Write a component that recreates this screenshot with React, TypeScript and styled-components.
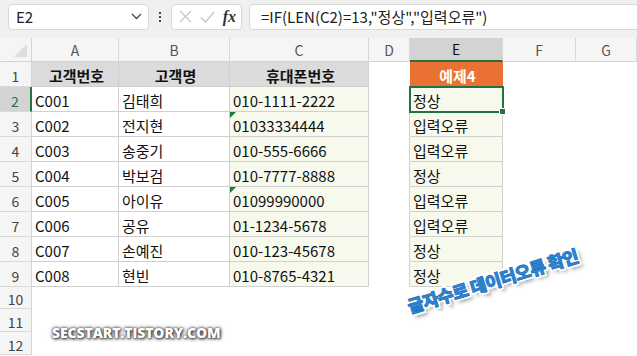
import React from "react";
import styled, { createGlobalStyle } from "styled-components";

const GlobalStyle = createGlobalStyle`
    html, body {
        margin: 0;
        padding: 0;
        background: #ffffff;
    }
    body {
        font-family: "Noto Sans CJK KR", "Noto Sans", sans-serif;
    }
`;

const Sheet = styled.div`
    position: relative;
    width: 637px;
    height: 356px;
    overflow: hidden;
    background: #ffffff;
    color: #000;
`;

const Toolbar = styled.div`
    display: flex;
    align-items: center;
    height: 38px;
    padding: 0 0 5px 8px;
    box-sizing: border-box;
    background: #f0f0f0;
`;

const NameBox = styled.div`
    display: flex;
    align-items: center;
    justify-content: space-between;
    flex-shrink: 0;
    width: 141px;
    height: 26px;
    box-sizing: border-box;
    padding: 0 6px 0 7px;
    background: #fff;
    border: 1px solid #d8d8d8;
    border-radius: 4px;
    font-size: 15px;
    color: #222;
`;

const Dots = styled.div`
    display: flex;
    flex-direction: column;
    align-items: center;
    justify-content: center;
    flex-shrink: 0;
    gap: 2px;
    width: 22px;
    height: 26px;

    span {
        width: 2px;
        height: 2px;
        background: #444;
    }
`;

const FxBox = styled.div`
    display: flex;
    align-items: center;
    justify-content: space-between;
    flex-shrink: 0;
    width: 71px;
    height: 26px;
    box-sizing: border-box;
    padding: 0 5px 0 7px;
    background: #fff;
    border: 1px solid #d8d8d8;
    border-radius: 4px;
`;

const Fx = styled.span`
    font-family: "Liberation Serif", serif;
    font-style: italic;
    font-weight: bold;
    font-size: 16px;
    color: #333;
`;

const FormulaBox = styled.div`
    display: flex;
    align-items: center;
    flex-shrink: 0;
    width: 420px;
    height: 26px;
    margin-left: 7px;
    box-sizing: border-box;
    padding-left: 11px;
    background: #fff;
    border: 1px solid #d8d8d8;
    border-radius: 4px;
    font-size: 15px;
    color: #222;
    white-space: nowrap;
`;

const Row = styled.div<{ $h: number }>`
    display: flex;
    height: ${(p) => p.$h}px;
`;

const Corner = styled.div`
    position: relative;
    width: 32px;
    flex-shrink: 0;
    box-sizing: border-box;
    background: #f5f5f5;
    border-right: 1px solid #d4d4d4;
    border-bottom: 1px solid #d4d4d4;

    &::after {
        content: "";
        position: absolute;
        right: 4px;
        bottom: 4px;
        border-left: 13px solid transparent;
        border-bottom: 13px solid #dedede;
    }
`;

const ColHead = styled.div<{ $w: number; $active?: boolean }>`
    display: flex;
    align-items: center;
    justify-content: center;
    width: ${(p) => p.$w}px;
    flex-shrink: 0;
    box-sizing: border-box;
    background: ${(p) => (p.$active ? "#d3d3d3" : "#f5f5f5")};
    border-right: 1px solid #d9d9d9;
    border-bottom: ${(p) => (p.$active ? "2px solid #217346" : "1px solid #d4d4d4")};
    font-size: 14px;
    color: ${(p) => (p.$active ? "#111" : "#555")};
`;

const RowHead = styled.div<{ $active?: boolean }>`
    display: flex;
    align-items: center;
    justify-content: center;
    padding-top: 3px;
    width: 32px;
    flex-shrink: 0;
    box-sizing: border-box;
    background: ${(p) => (p.$active ? "#d3d3d3" : "#f5f5f5")};
    border-bottom: 1px solid #d9d9d9;
    border-right: ${(p) => (p.$active ? "2px solid #217346" : "1px solid #d4d4d4")};
    font-size: 14px;
    color: ${(p) => (p.$active ? "#217346" : "#444")};
`;

const Cell = styled.div<{
    $w: number;
    $fill?: string;
    $bold?: boolean;
    $center?: boolean;
    $color?: string;
    $border?: boolean;
    $edge?: boolean;
    $flag?: boolean;
    $selected?: boolean;
}>`
    position: relative;
    display: flex;
    align-items: center;
    justify-content: ${(p) => (p.$center ? "center" : "flex-start")};
    width: ${(p) => p.$w}px;
    flex-shrink: 0;
    box-sizing: border-box;
    padding: 2px 0 0 3px;
    background: ${(p) => p.$fill || "transparent"};
    border-right: 1px solid ${(p) => (p.$border || p.$edge ? "#d0d0d0" : "transparent")};
    border-bottom: 1px solid ${(p) => (p.$border ? "#d0d0d0" : "transparent")};
    font-size: 15px;
    font-weight: ${(p) => (p.$bold ? 700 : 400)};
    color: ${(p) => p.$color || "#111"};
    white-space: nowrap;

    ${(p) =>
        p.$flag &&
        `&::before {
            content: "";
            position: absolute;
            left: 0;
            top: 0;
            border-top: 6px solid #1f7a36;
            border-right: 6px solid transparent;
        }`}

    ${(p) =>
        p.$selected &&
        `outline: 2px solid #217346;
        outline-offset: -1px;
        z-index: 2;
        &::after {
            content: "";
            position: absolute;
            right: -4px;
            bottom: -4px;
            width: 5px;
            height: 5px;
            background: #217346;
            border: 1px solid #fff;
        }`}
`;

const Watermark = styled.div`
    position: absolute;
    left: 52px;
    top: 323px;
    font-family: "Open Sans", "Noto Sans", sans-serif;
    font-weight: 800;
    font-size: 14px;
    letter-spacing: -0.1px;
    color: #fff;
    text-shadow: 0 0 2px #444, 1px 1px 3px #333, 0 0 4px #666;
`;

const Stamp = styled.div`
    position: absolute;
    left: 404px;
    top: 268px;
    transform: rotate(-17deg);
    transform-origin: center;
    font-family: "Noto Sans CJK KR", sans-serif;
    font-weight: 900;
    font-size: 17.5px;
    letter-spacing: -0.6px;
    color: #2b86d6;
    -webkit-text-stroke: 0.7px #1c6db8;
    text-shadow: 1px 0 0 #fff, -1px 0 0 #fff, 0 1px 0 #fff, 0 -1px 0 #fff, 2px 2px 0 #fff,
        -2px -2px 0 #fff, 2px -2px 0 #fff, -2px 2px 0 #fff, 2px 0 0 #fff, -2px 0 0 #fff,
        0 2px 0 #fff, 0 -2px 0 #fff, 3px 4px 4px rgba(0, 0, 0, 0.45);
    white-space: nowrap;
`;

const widths = { A: 87, B: 111, C: 139, D: 41, E: 93, F: 73, G: 61 };
const cols = ["A", "B", "C", "D", "E", "F", "G"] as const;

const data = [
    { id: "C001", name: "김태희", phone: "010-1111-2222", result: "정상" },
    { id: "C002", name: "전지현", phone: "01033334444", result: "입력오류", flag: true },
    { id: "C003", name: "송중기", phone: "010-555-6666", result: "입력오류" },
    { id: "C004", name: "박보검", phone: "010-7777-8888", result: "정상" },
    { id: "C005", name: "아이유", phone: "01099990000", result: "입력오류", flag: true },
    { id: "C006", name: "공유", phone: "01-1234-5678", result: "입력오류" },
    { id: "C007", name: "손예진", phone: "010-123-45678", result: "정상" },
    { id: "C008", name: "현빈", phone: "010-8765-4321", result: "정상" },
];

const HEAD = "#dbdbdb";
const SOFT = "#f6f9ec";
const ORANGE = "#e97132";

const Chevron = () => (
    <svg width="11" height="7" viewBox="0 0 11 7">
        <path d="M1 1l4.5 4.5L10 1" fill="none" stroke="#444" strokeWidth="1.3" />
    </svg>
);

const Cross = () => (
    <svg width="13" height="13" viewBox="0 0 13 13">
        <path d="M1 1l11 11M12 1L1 12" stroke="#c4c4c4" strokeWidth="1.2" />
    </svg>
);

const Check = () => (
    <svg width="15" height="12" viewBox="0 0 15 12">
        <path d="M1 6.5l4.5 4.5L14 1" fill="none" stroke="#c4c4c4" strokeWidth="1.2" />
    </svg>
);

const App: React.FC = () => {
    return (
        <Sheet>
            <GlobalStyle />
            <Toolbar>
                <NameBox>
                    E2
                    <Chevron />
                </NameBox>
                <Dots>
                    <span />
                    <span />
                    <span />
                </Dots>
                <FxBox>
                    <Cross />
                    <Check />
                    <Fx>fx</Fx>
                </FxBox>
                <FormulaBox>=IF(LEN(C2)=13,"정상","입력오류")</FormulaBox>
            </Toolbar>

            <Row $h={24}>
                <Corner />
                {cols.map((c) => (
                    <ColHead key={c} $w={widths[c]} $active={c === "E"}>
                        {c}
                    </ColHead>
                ))}
            </Row>

            <Row $h={25}>
                <RowHead>1</RowHead>
                <Cell $w={widths.A} $fill={HEAD} $bold $center $border>고객번호</Cell>
                <Cell $w={widths.B} $fill={HEAD} $bold $center $border>고객명</Cell>
                <Cell $w={widths.C} $fill={HEAD} $bold $center $border>휴대폰번호</Cell>
                <Cell $w={widths.D} />
                <Cell $w={widths.E} $fill={ORANGE} $bold $center $color="#fff">예제4</Cell>
                <Cell $w={widths.F} />
                <Cell $w={widths.G} />
            </Row>

            {data.map((d, i) => (
                <Row $h={25} key={d.id}>
                    <RowHead $active={i === 0}>{i + 2}</RowHead>
                    <Cell $w={widths.A} $border>{d.id}</Cell>
                    <Cell $w={widths.B} $border>{d.name}</Cell>
                    <Cell $w={widths.C} $fill={SOFT} $border $flag={d.flag}>{d.phone}</Cell>
                    <Cell $w={widths.D} $edge />
                    <Cell $w={widths.E} $fill={SOFT} $border $selected={i === 0}>{d.result}</Cell>
                    <Cell $w={widths.F} />
                    <Cell $w={widths.G} />
                </Row>
            ))}

            {[10, 11, 12].map((n) => (
                <Row $h={n === 10 ? 22 : 23} key={n}>
                    <RowHead>{n}</RowHead>
                </Row>
            ))}

            <Watermark>SECSTART.TISTORY.COM</Watermark>
            <Stamp>글자수로 데이터오류 확인</Stamp>
        </Sheet>
    );
};

export default App;
